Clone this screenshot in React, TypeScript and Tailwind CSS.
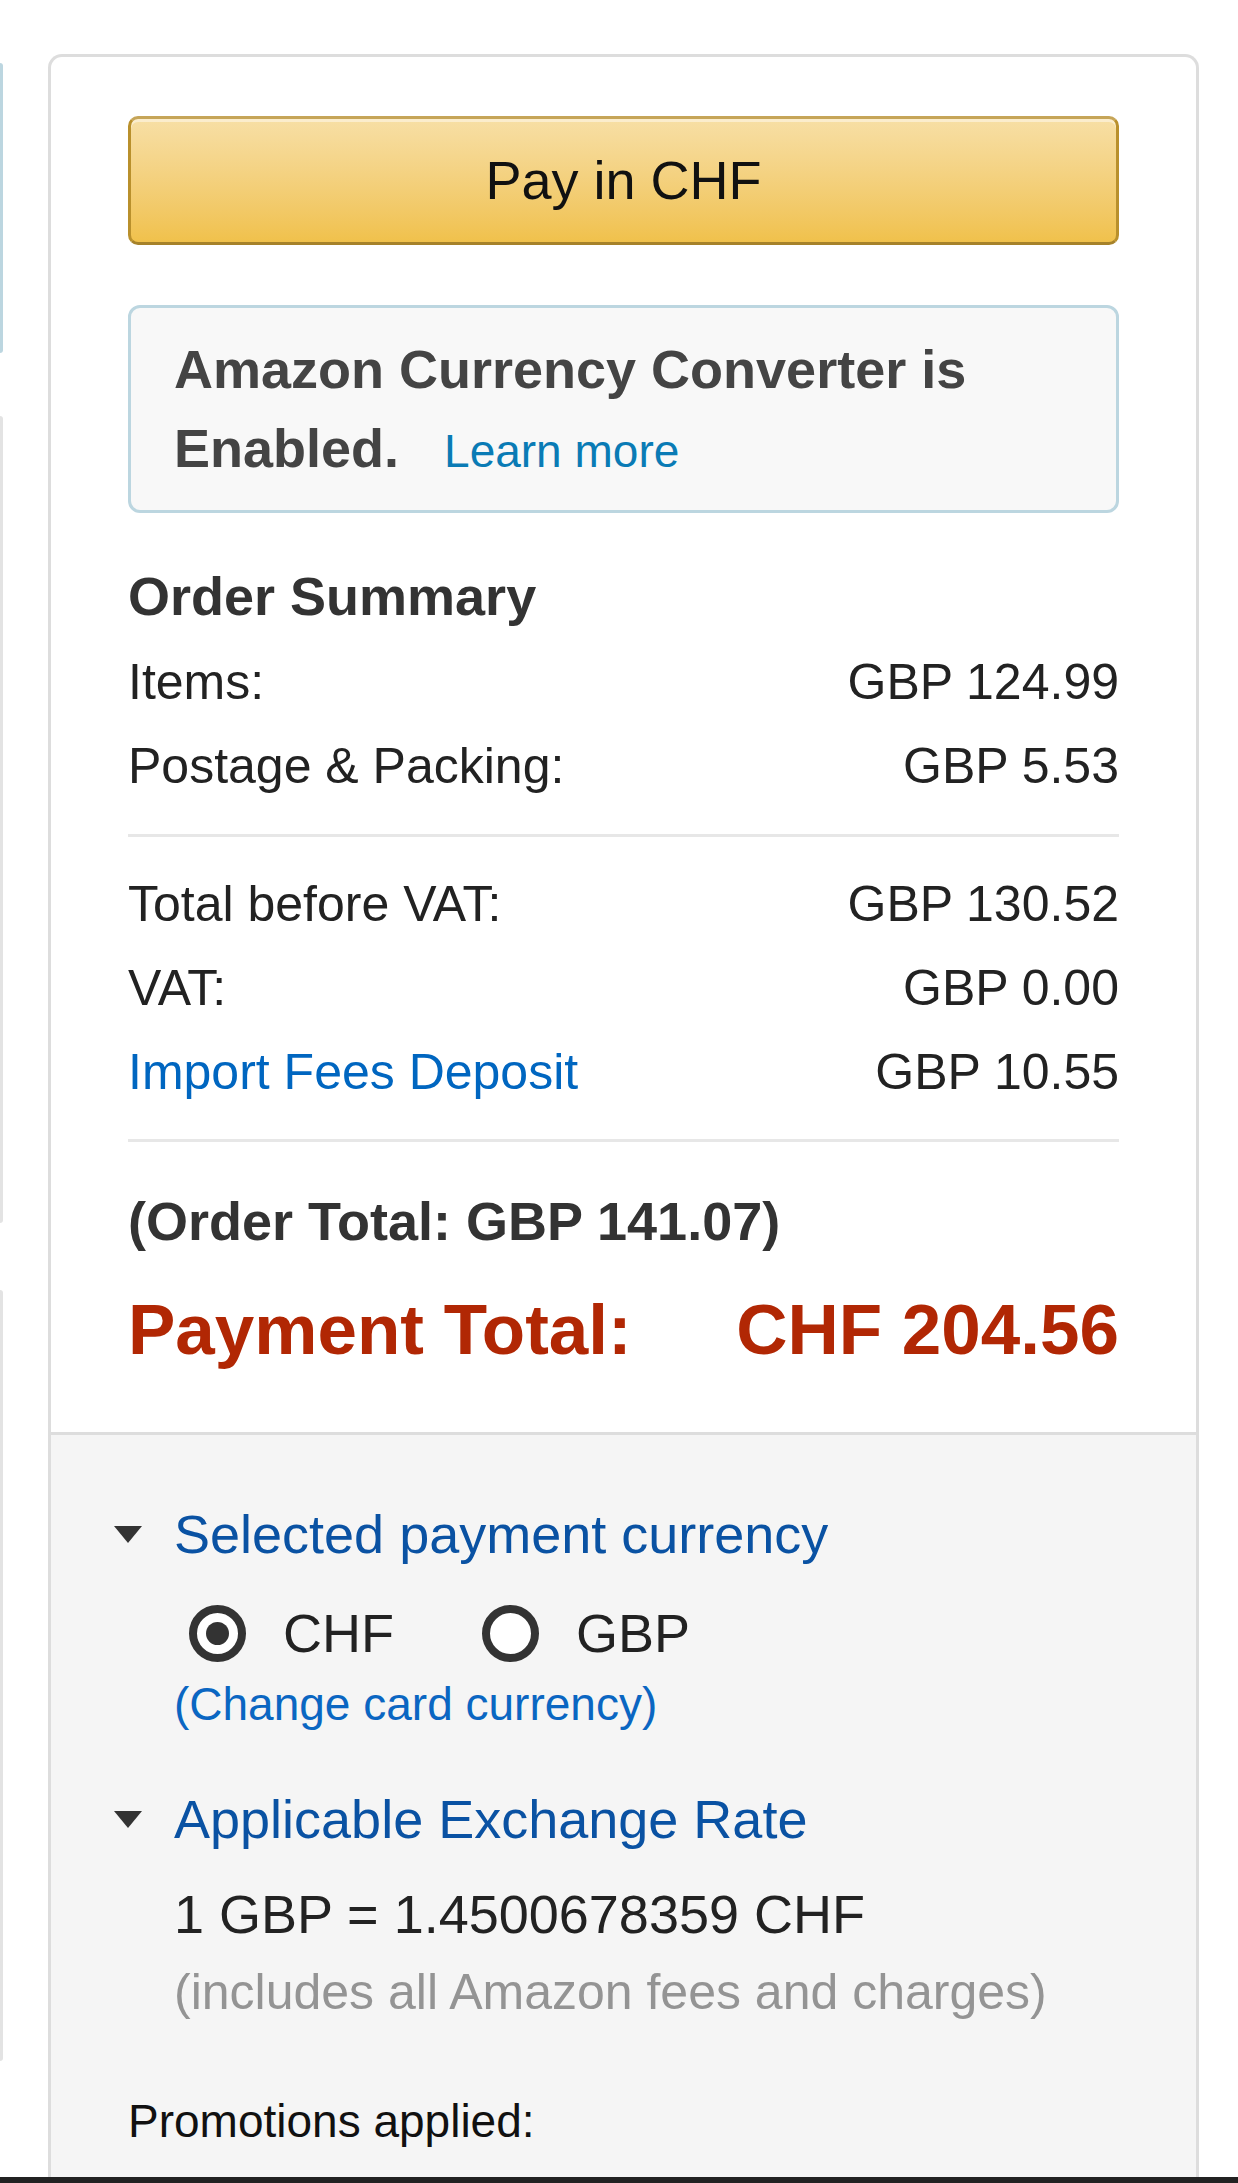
import React from 'react';

const Row: React.FC<{ label: React.ReactNode; value: string }> = ({ label, value }) => (
  <div className="flex justify-between leading-[84px] text-[50px] text-[#222]">
    <span>{label}</span>
    <span>{value}</span>
  </div>
);

const Caret: React.FC = () => (
  <svg width="28" height="17" viewBox="0 0 28 17" className="shrink-0">
    <polygon points="0,0 28,0 14,17" fill="#333" />
  </svg>
);

const Radio: React.FC<{ checked?: boolean }> = ({ checked }) => (
  <span className="flex h-[57px] w-[57px] shrink-0 items-center justify-center rounded-full border-[8px] border-[#333] bg-white">
    {checked && <span className="h-[23px] w-[23px] rounded-full bg-[#333]" />}
  </span>
);

const App: React.FC = () => {
  return (
    <div className="flex h-[2183px] w-[1238px] flex-col overflow-hidden bg-white font-['Liberation_Sans',Arial,sans-serif]">
      <div className="flex flex-1">
        {/* edges of the cards to the left */}
        <div className="flex w-[3px] flex-col">
          <div className="mt-[63px] h-[290px] rounded-r-[10px] border-r-[3px] border-[#bcd6e0]" />
          <div className="mt-[63px] h-[807px] rounded-r-[10px] border-r-[3px] border-[#e3e3e3]" />
          <div className="mt-[67px] h-[771px] rounded-r-[10px] border-r-[3px] border-[#e3e3e3]" />
        </div>

        <div className="ml-[45px] mt-[54px] flex w-[1151px] flex-col rounded-t-[14px] border-[3px] border-b-0 border-[#ddd]">
          <div className="px-[77px] pb-[62px] pt-[59px]">
            <button
              type="button"
              className="flex h-[129px] w-full items-center justify-center rounded-[10px] border-[3px] border-x-[#b9902c] border-b-[#a6822a] border-t-[#c6a558] bg-linear-to-b from-[#f7dfa5] to-[#f0c14b] text-[54px] text-[#111] shadow-[inset_0_3px_0_rgba(255,255,255,0.45)]"
            >
              Pay in CHF
            </button>

            <div className="mt-[60px] rounded-[12px] border-[3px] border-[#bcd6e0] bg-[#f8f8f8] pb-[22px] pl-[43px] pr-[40px] pt-[22px]">
              <p className="text-[54px] font-bold leading-[79px] text-[#444]">
                Amazon Currency Converter is Enabled.
                <a className="ml-[45px] text-[46px] font-normal leading-[60px] text-[#0a7bb5]">Learn more</a>
              </p>
            </div>

            <h2 className="mt-[53px] text-[54px] font-bold leading-[60px] text-[#333]">Order Summary</h2>
            <div className="mt-[14px]">
              <Row label="Items:" value="GBP 124.99" />
              <Row label="Postage & Packing:" value="GBP 5.53" />
            </div>
            <div className="mt-[26px] h-[3px] bg-[#e7e7e7]" />
            <div className="mt-[25px]">
              <Row label="Total before VAT:" value="GBP 130.52" />
              <Row label="VAT:" value="GBP 0.00" />
              <Row label={<a className="text-[#0066c0]">Import Fees Deposit</a>} value="GBP 10.55" />
            </div>
            <div className="mt-[25px] h-[3px] bg-[#e7e7e7]" />

            <p className="mt-[49px] text-[54px] font-bold leading-[60px] text-[#333]">(Order Total: GBP 141.07)</p>
            <div className="mt-[39px] flex justify-between text-[71px] font-bold leading-[80px] text-[#b12704]">
              <span>Payment Total:</span>
              <span>CHF 204.56</span>
            </div>
          </div>

          <div className="flex-1 border-t-[3px] border-[#ddd] bg-[#f5f5f5] pl-[63px] pt-[69px]">
            <div className="flex items-center gap-[32px] text-[54px] leading-[60px] text-[#0a52a3]">
              <Caret />
              <span>Selected payment currency</span>
            </div>
            <div className="ml-[60px]">
              <div className="mt-[39px] flex h-[60px] items-center text-[54px] text-[#222]">
                <span className="ml-[15px]">
                  <Radio checked />
                </span>
                <span className="ml-[37px]">CHF</span>
                <span className="ml-[88px]">
                  <Radio />
                </span>
                <span className="ml-[37px]">GBP</span>
              </div>
              <a className="mt-[15px] block text-[46px] leading-[52px] text-[#0a66c2]">(Change card currency)</a>
            </div>

            <div className="mt-[59px] flex items-center gap-[32px] text-[54px] leading-[60px] text-[#0a52a3]">
              <Caret />
              <span>Applicable Exchange Rate</span>
            </div>
            <div className="ml-[60px]">
              <p className="mt-[35px] text-[54px] leading-[60px] text-[#222]">1 GBP = 1.4500678359 CHF</p>
              <p className="mt-[18px] text-[50px] leading-[60px] text-[#949494]">(includes all Amazon fees and charges)</p>
            </div>

            <p className="ml-[14px] mt-[73px] text-[46px] leading-[52px] text-[#111]">Promotions applied:</p>
          </div>
        </div>
      </div>
      <div className="h-[6px] bg-[#222]" />
    </div>
  );
};

export default App;
